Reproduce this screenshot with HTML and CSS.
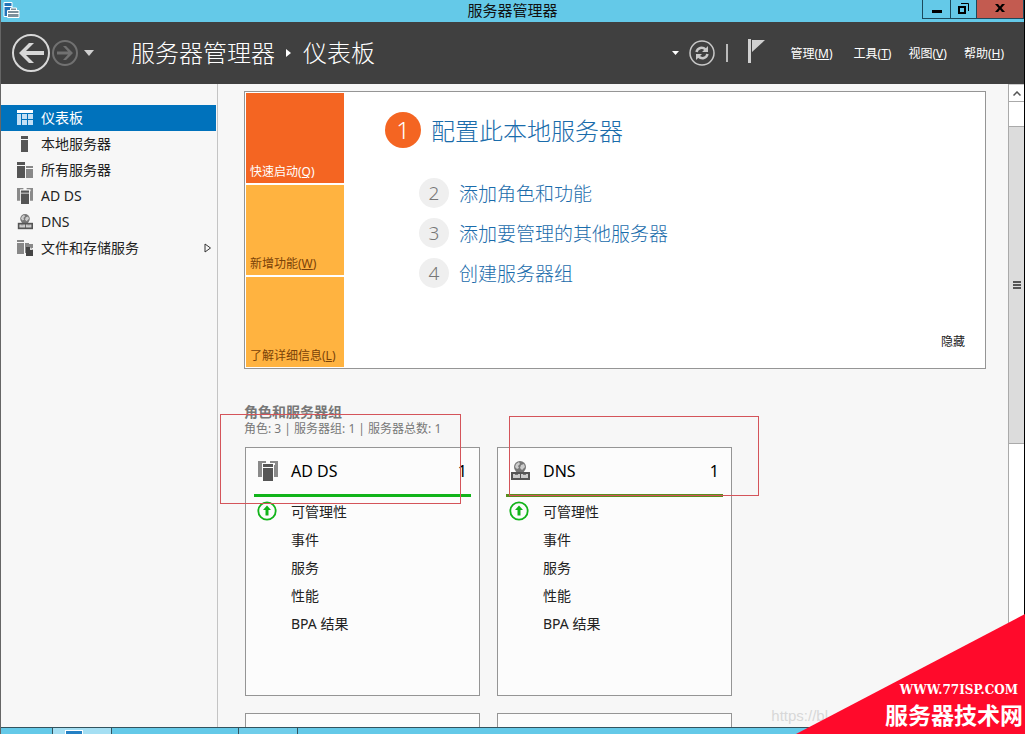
FILE: index.html
```html
<!DOCTYPE html>
<html lang="zh-CN">
<head>
<meta charset="utf-8">
<title>服务器管理器</title>
<link rel="stylesheet" href="styles.css">
</head>
<body>
<svg width="0" height="0" class="sprite" aria-hidden="true">
  <symbol id="i-adds" viewBox="0 0 20 20">
    <path fill="#8a8a8a" d="M0 0h8v2H4v2h1v12H0zM12 0h8v16h-4V4h1V2h-5z"/>
    <path fill="#fcfcfc" d="M4 2h12v18H4z"/>
    <path fill="#555" d="M5 3h10v3H5zM5 7h10v13H5z"/>
  </symbol>
  <symbol id="i-dns" viewBox="0 0 20 20">
    <circle cx="10" cy="6" r="6" fill="#777"/>
    <path fill="#ccc" d="M6 3l3-2 1 2-2 2 1 2-2 1-2-2zM11 4l3-1 1 3-3 3-2-2z"/>
    <path fill="#555" d="M1 11h19v8H1z"/>
    <path fill="#ccc" d="M3 13h7v4H3zM11 13h7v4h-7z"/>
    <path fill="#777" d="M5 13h3v1H5zM13 13h3v1h-3z"/>
  </symbol>
  <symbol id="i-up" viewBox="0 0 20 20">
    <circle cx="10" cy="10" r="8.700" fill="none" stroke="#12b41a" stroke-width="1.800"/>
    <path fill="#12b41a" d="M10 4.500l4 4.500h-2.500v5.500h-3V9H6z"/>
  </symbol>
</svg>
<div class="window">
  <header class="titlebar">
    <svg class="app-icon" width="17" height="16" viewBox="0 0 17 16"><path fill="#2173b8" stroke="#fff" d="M1 .5h8v14H1zM1 4.500h8"/><path fill="#7c8f9b" stroke="#fff" d="M4.500 8.500h11.500v7H4.500zM7.500 8V6h6v2M5 11.500h11"/></svg>
    <h1 class="window-title">服务器管理器</h1>
    <div class="window-buttons">
      <button class="wb wb-min" aria-label="最小化"><svg width="10" height="10"><path d="M0 4h10v3H0z"/></svg></button>
      <button class="wb wb-max" aria-label="还原"><svg width="11" height="11" fill="none" stroke="#000"><path d="M3 .5h7.500V8"/><path stroke-width="2" d="M1 4h6v6H1z"/></svg></button>
      <button class="wb wb-close" aria-label="关闭"><svg width="10" height="8"><path d="M0 0h3l2 2.500L7 0h3L6.500 4 10 8H7L5 5.500 3 8H0l3.500-4z"/></svg></button>
    </div>
  </header>
  <div class="toolbar">
    <button class="icon-btn" aria-label="后退"><svg width="40" height="40" viewBox="0 0 40 40"><circle cx="20" cy="20" r="18" fill="none" stroke="#d8d8d8" stroke-width="2"/><path fill="#d8d8d8" d="M8 20L18 10h5l-8 8h18v4H15l8 8h-5z"/></svg></button>
    <button class="icon-btn" aria-label="前进"><svg width="28" height="26" viewBox="-1 0 28 26"><circle cx="13" cy="13" r="12" fill="none" stroke="#717171" stroke-width="2"/><path fill="#717171" d="M21 13l-7 7h-3l5-5.500H5v-3h11L11 6h3z"/></svg></button>
    <button class="icon-btn history" aria-label="历史记录"><svg width="10" height="6"><path fill="#d0d0d0" d="M0 0h10L5 6z"/></svg></button>
    <div class="crumbs"><span>服务器管理器</span><svg width="6" height="8"><path fill="#fff" d="M0 0l5 4-5 4z"/></svg><span>仪表板</span></div>
    <div class="tools">
      <button class="icon-btn" aria-label="选项"><svg width="7" height="4"><path fill="#fff" d="M0 0h7L3.500 4z"/></svg></button>
      <button class="icon-btn refresh" aria-label="刷新"><svg width="26" height="26" viewBox="0 0 26 26" fill="none" stroke="#c8c8c8"><circle cx="13" cy="13" r="12" stroke-width="1.500"/><path stroke-width="2.500" d="M7.500 12c1-4.500 6-5.500 9-2.500M18.500 14c-1 4.500-6 5.500-9 2.500"/><path fill="#c8c8c8" stroke="none" d="M19 6v6h-6zM7 20v-6h6z"/></svg></button>
      <span class="divider"></span>
      <button class="icon-btn flag" aria-label="通知"><svg width="17" height="24" viewBox="0 0 17 24"><path fill="#d0d0d0" d="M0 0h3v24H0zM4 1h13L4 13z"/></svg></button>
    </div>
    <nav class="menus">
      <button class="manage">管理(<u>M</u>)</button><button>工具(<u>T</u>)</button><button>视图(<u>V</u>)</button><button>帮助(<u>H</u>)</button>
    </nav>
  </div>
  <div class="body">
    <nav class="sidebar">
      <a class="nav-item active" href="#"><svg width="16" height="16"><path fill="#fff" d="M0 0h16v3H0z"/><path fill="#c4e0f5" d="M0 4h4v11H0zM5 4h5v5H5zM11 4h5v5h-5zM5 10h5v5H5zM11 10h5v5h-5z"/></svg><span>仪表板</span></a>
      <a class="nav-item" href="#"><svg width="16" height="16" fill="#555"><path d="M4 0h7v3H4zM4 4h7v12H4z"/></svg><span>本地服务器</span></a>
      <a class="nav-item" href="#"><svg width="16" height="16"><path fill="#555" d="M0 0h8v3H0zM0 4h8v12H0z"/><path fill="#888" d="M9 4h7v2H9zM9 7h7v9H9z"/></svg><span>所有服务器</span></a>
      <a class="nav-item" href="#"><svg width="16" height="16"><use href="#i-adds"/></svg><span>AD DS</span></a>
      <a class="nav-item" href="#"><svg width="16" height="16"><use href="#i-dns"/></svg><span>DNS</span></a>
      <a class="nav-item" href="#"><svg width="16" height="16"><path fill="#888" d="M0 0h7v2H0zM0 3h7v11H0zM8 3h4v1h4v4h-3V7H9v6H8z"/><path fill="#444" d="M9 7h4l3 3v6H9z"/><path fill="#ddd" d="M13 7v3h3z"/></svg><span>文件和存储服务</span><svg class="expand" width="8" height="10"><path fill="none" stroke="#333" d="M1 1l5.500 4L1 9z"/></svg></a>
    </nav>
    <main class="dashboard">
      <section class="welcome">
        <div class="tiles">
          <button class="tile hot">快速启动(<u>Q</u>)</button>
          <button class="tile">新增功能(<u>W</u>)</button>
          <button class="tile">了解详细信息(<u>L</u>)</button>
        </div>
        <div class="steps">
          <a class="step first" href="#"><span class="num">1</span><span class="step-text">配置此本地服务器</span></a>
          <a class="step" href="#"><span class="num">2</span>添加角色和功能</a>
          <a class="step" href="#"><span class="num">3</span>添加要管理的其他服务器</a>
          <a class="step" href="#"><span class="num">4</span>创建服务器组</a>
        </div>
        <button class="hide">隐藏</button>
      </section>
      <h2 class="group-title">角色和服务器组</h2>
      <p class="group-sub">角色: 3 | 服务器组: 1 | 服务器总数: 1</p>
      <div class="cards">
        <article class="card">
          <header class="card-head"><svg width="20" height="20"><use href="#i-adds"/></svg><h3>AD DS</h3><span>1</span></header>
          <ul>
            <li><svg width="20" height="20"><use href="#i-up"/></svg>可管理性</li><li>事件</li><li>服务</li><li>性能</li><li>BPA 结果</li>
          </ul>
        </article>
        <article class="card">
          <header class="card-head marked"><svg width="20" height="20"><use href="#i-dns"/></svg><h3>DNS</h3><span>1</span></header>
          <ul>
            <li><svg width="20" height="20"><use href="#i-up"/></svg>可管理性</li><li>事件</li><li>服务</li><li>性能</li><li>BPA 结果</li>
          </ul>
        </article>
        <article class="card"></article>
        <article class="card"></article>
      </div>
      <div class="mark mark-adds"></div>
      <div class="mark mark-dns"></div>
    </main>
    <div class="scrollbar">
      <button class="scroll-up" aria-label="向上滚动"><svg width="8" height="5"><path fill="none" stroke="#555" stroke-width="1.500" d="M.5 4.500L4 1l3.500 3.500"/></svg></button>
      <div class="thumb"><svg width="8" height="8"><path fill="#555" d="M0 0h8v2H0zM0 3h8v2H0zM0 6h8v2H0z"/></svg></div>
    </div>
  </div>
  <footer class="taskbar"><span class="task active"><i></i></span><span class="task"></span></footer>
</div>
<div class="blog-mark">https://bl</div>
<div class="ribbon"><span class="ribbon-url">WWW.77ISP.COM</span><strong>服务器技术网</strong></div>
</body>
</html>
```
FILE: styles.css
```css
* { box-sizing: border-box; }
body {
  margin: 0;
  position: relative;
  overflow: hidden;
  font-family: "Noto Sans", "Noto Sans CJK SC", sans-serif;
  font-size: 14px;
  color: #222;
  background: #f7f7f7;
}
h1, h2, h3, p, ul { margin: 0; padding: 0; font-weight: 400; }
ul { list-style: none; }
button { border: 0; padding: 0; background: none; font: inherit; color: inherit; }
a { color: inherit; text-decoration: none; }
svg { display: block; flex: none; }
.sprite { position: absolute; }
.window {
  height: 100vh;
  display: flex;
  flex-direction: column;
  border-left: 1px solid #666;
  border-right: 1px solid #000;
}

.titlebar {
  flex: none;
  height: 22px;
  display: grid;
  grid-template-columns: 1fr auto 1fr;
  align-items: start;
  background: #64c9e8;
  color: #111;
}
.app-icon { margin: 2px; }
.window-title { font-size: 15px; line-height: 21px; }
.window-buttons { display: flex; justify-self: end; height: 19px; border: 1px solid #1b4a5c; border-top: 0; }
.wb { display: grid; place-items: center; width: 26px; padding-bottom: 2px; border-right: 1px solid #1b4a5c; }
.wb-min { width: 28px; padding: 3px 0 0; }
.wb-close { width: 46px; border: 0; background: #c35b50; }

.toolbar {
  flex: none;
  height: 62px;
  display: flex;
  align-items: center;
  padding: 0 20px 0 10px;
  background: #404040;
  color: #fff;
}
.icon-btn { display: grid; place-items: center; flex: none; }
.history { margin-left: 5px; }
.crumbs { display: flex; align-items: center; gap: 11px; margin-left: 37px; font-size: 24px; font-weight: 300; line-height: 36px; white-space: nowrap; }
.tools { display: flex; align-items: center; margin-left: auto; }
.refresh { margin: 0 11px 0 10px; }
.divider { width: 2px; height: 18px; margin-right: 20px; background: #bbb; }
.flag { padding-bottom: 4px; }
.menus { display: flex; gap: 17px; margin-left: 25px; font-size: 12px; white-space: nowrap; }
.manage { margin-right: 4px; }

.body { flex: 1; min-height: 0; display: flex; }
.sidebar { flex: none; width: 217px; padding: 21px 1px 0 0; border-right: 1px solid #c4c4c4; }
.nav-item { display: flex; align-items: center; gap: 8px; height: 26px; padding: 0 4px 0 16px; }
.nav-item span { padding-bottom: 2px; }
.nav-item.active { background: #0072bc; color: #fff; }
.expand { margin-left: auto; }

.dashboard { flex: 1; position: relative; overflow: hidden; padding: 7px 22px 0 26px; }
.welcome { display: flex; padding: 1px; border: 1px solid #959595; background: #fff; }
.tiles { display: grid; gap: 2px; width: 98px; }
.tile { display: flex; align-items: flex-end; height: 90px; padding: 0 0 3px 4px; background: #ffb340; color: #7a4208; font-size: 12px; white-space: nowrap; }
.tile.hot { background: #f46522; color: #fff; }
.steps { padding: 19px 0 0 75px; color: #1a6cab; font-weight: 300; white-space: nowrap; }
.step { display: flex; align-items: center; gap: 10px; height: 30px; margin-bottom: 10px; font-size: 19px; }
.step.first { height: 36px; margin-bottom: 30px; font-size: 24px; }
.step-text { padding-bottom: 2px; }
.num { display: grid; place-items: center; width: 30px; height: 30px; border-radius: 50%; background: #efefef; color: #777; line-height: 30px; }
.step.first .num { width: 36px; height: 36px; margin-left: -34px; background: #f46522; color: #fff; }
.hide { align-self: flex-end; margin: 0 19px 17px auto; font-size: 12px; }

.group-title { margin-top: 33px; font-size: 14px; font-weight: 700; line-height: 20px; color: #777; }
.group-sub { font-size: 12px; line-height: 14px; color: #777; }
.cards { display: grid; grid-template-columns: 235px 235px; gap: 17px; margin-top: 11px; padding-left: 1px; }
.card { height: 249px; padding: 0 8px; border: 1px solid #959595; background: #fcfcfc; }
.card-head { display: flex; align-items: center; gap: 13px; height: 49px; padding: 0 4px; border-bottom: 3px solid #12b41a; color: #000; font-size: 16px; }
.card-head h3 { font-size: 16px; }
.card-head span { margin-left: auto; }
.card-head.marked { border-color: #5a8d1d; }
.card li { display: flex; align-items: center; gap: 14px; height: 28px; padding-left: 37px; }
.card li:first-child { padding-left: 3px; }
.mark { position: absolute; border: 1px solid #d4545a; }
.mark-adds { left: 2px; top: 330px; width: 241px; height: 90px; }
.mark-dns { left: 291px; top: 332px; width: 250px; height: 80px; }

.scrollbar { flex: none; width: 16px; display: flex; flex-direction: column; border-left: 1px solid #aaa; background: #fff; }
.scroll-up { display: grid; place-items: center; height: 18px; margin-bottom: 24px; border-bottom: 1px solid #aaa; border-top: 1px solid #ccc; }
.thumb { display: grid; place-items: center; flex: 0 0 318px; border: solid #aaa; border-width: 1px 0; background: #dcdcdc; }

.taskbar { flex: none; display: flex; height: 7px; padding-left: 51px; border-top: 1px solid #33535e; background: #64c9e8; }
.task { width: 60px; border: solid #33535e; border-width: 0 1px; background: #6fcdea; margin-right: 126px; }
.task.active { background: #a5dff3; }
.task i { display: block; width: 16px; height: 3px; margin: 3px 0 0 13px; background: #2380c4; outline: 1px solid #fff; }

.blog-mark { position: absolute; right: 197px; bottom: 7px; color: #d8d8d8; font: 15px/22px "Liberation Sans", sans-serif; }
.ribbon {
  position: absolute;
  right: 0;
  bottom: 0;
  width: 229px;
  height: 120px;
  display: flex;
  flex-direction: column;
  align-items: flex-end;
  justify-content: flex-end;
  padding: 0 2px 2px 0;
  background: #ff0a2b;
  color: #fff;
  clip-path: polygon(100% 0, 100% 100%, 0 100%);
}
.ribbon-url { margin-right: 5px; font: 700 12px/16px "DejaVu Serif", serif; }
.ribbon strong { font-size: 23px; line-height: 34px; }
```
